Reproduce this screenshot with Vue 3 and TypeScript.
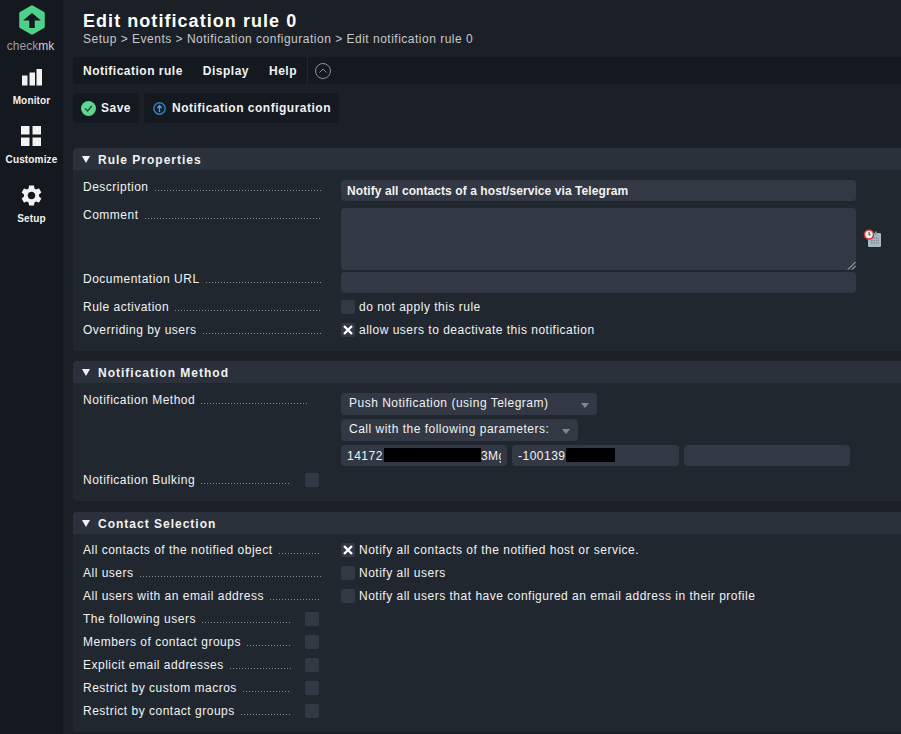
<script setup lang="ts">
interface Row { label: string; text?: string; checked?: boolean; outer?: boolean }
const contactRows: Row[] = [
  { label: 'All contacts of the notified object', text: 'Notify all contacts of the notified host or service.', checked: true },
  { label: 'All users', text: 'Notify all users' },
  { label: 'All users with an email address', text: 'Notify all users that have configured an email address in their profile' },
  { label: 'The following users', outer: true },
  { label: 'Members of contact groups', outer: true },
  { label: 'Explicit email addresses', outer: true },
  { label: 'Restrict by custom macros', outer: true },
  { label: 'Restrict by contact groups', outer: true },
]
const crumbs = 'Setup > Events > Notification configuration > Edit notification rule 0'
</script>

<template>
  <div class="page">
    <nav class="side">
      <div class="logo">
        <svg width="26" height="30" viewBox="0 0 26 30">
          <path d="M13 1.500 24.500 8.200 V21.800 L13 28.500 L1.500 21.800 V8.200 Z" fill="#4fd18b" stroke="#4fd18b" stroke-width="2.500" stroke-linejoin="round" />
          <path d="M13 8 L22 15.500 H15.700 V23 H10.300 V15.500 H4 Z" fill="#14181f" />
        </svg>
        <div class="brand">check<span>mk</span></div>
      </div>
      <div class="nav-item first">
        <svg width="20" height="17" viewBox="0 0 20 17"><path d="M0 6.500h5.500V16.500H0zM7.500 3.500H13v13H7.500zM14.500 0H20v16.500h-5.500z" fill="#f2f2f2" /></svg>
        <span>Monitor</span>
      </div>
      <div class="nav-item custom">
        <svg width="20" height="20" viewBox="0 0 20 20"><path d="M0 0h8.500v8.500H0zM11.500 0H20v8.500h-8.500zM0 11.500h8.500V20H0zM11.500 11.500H20V20h-8.500z" fill="#f2f2f2" /></svg>
        <span>Customize</span>
      </div>
      <div class="nav-item">
        <svg width="21" height="21" viewBox="2 2 20 20"><path fill="#f2f2f2" d="M19.140 12.940c.04-.3.06-.61.06-.94 0-.32-.02-.64-.07-.94l2.030-1.580c.18-.14.23-.41.12-.61l-1.920-3.320c-.12-.22-.37-.29-.59-.22l-2.390.96c-.5-.38-1.030-.7-1.620-.94l-.36-2.540c-.04-.24-.24-.41-.48-.41h-3.840c-.24 0-.43.17-.47.41l-.36 2.540c-.59.24-1.130.57-1.620.94l-2.390-.96c-.22-.08-.47 0-.59.22L2.740 8.870c-.12.21-.08.47.12.61l2.030 1.580c-.05.3-.09.63-.09.94s.02.64.07.94l-2.030 1.580c-.18.14-.23.41-.12.61l1.920 3.320c.12.22.37.29.59.22l2.390-.96c.5.38 1.030.7 1.620.94l.36 2.540c.05.24.24.41.48.41h3.840c.24 0 .44-.17.47-.41l.36-2.540c.59-.24 1.130-.56 1.620-.94l2.390.96c.22.08.47 0 .59-.22l1.920-3.320c.12-.22.07-.47-.12-.61l-2.010-1.580zM12 15.600c-1.980 0-3.600-1.620-3.600-3.600s1.620-3.600 3.600-3.600 3.600 1.620 3.600 3.600-1.620 3.600-3.600 3.600z" /></svg>
        <span>Setup</span>
      </div>
    </nav>

    <main class="main">
      <header class="title">
        <h1>Edit notification rule 0</h1>
        <div class="crumbs">{{ crumbs }}</div>
      </header>

      <div class="menubar">
        <div class="menus">
          <span>Notification rule</span><span>Display</span><span>Help</span>
        </div>
        <svg class="collapse" width="16" height="16" viewBox="0 0 16 16"><circle cx="8" cy="8" r="7.500" fill="none" stroke="#8b9097" /><path d="M4.500 9.500 8 6l3.500 3.500" fill="none" stroke="#8b9097" /></svg>
      </div>

      <div class="actions">
        <button class="btn save">
          <svg width="15" height="15" viewBox="0 0 15 15"><circle cx="7.500" cy="7.500" r="7.500" fill="#5fd68f" /><path d="M4.200 7.500 6.600 10 10.800 5" fill="none" stroke="#1f4a3a" stroke-width="1.300" /></svg>
          Save
        </button>
        <button class="btn conf">
          <svg width="13" height="13" viewBox="0 0 13 13"><circle cx="6.500" cy="6.500" r="5.700" fill="#14202e" stroke="#3a7fc4" stroke-width="1.400" /><path d="M6.500 10V4M4.300 6l2.200-2.300L8.700 6" fill="none" stroke="#5aa0e0" stroke-width="1.300" /></svg>
          Notification configuration
        </button>
      </div>

      <section class="sec one">
        <h2><i class="tri" />Rule Properties</h2>
        <div class="body">
          <div class="row r-input">
            <div class="lbl"><span>Description</span><b /></div>
            <div class="field wide strong">Notify all contacts of a host/service via Telegram</div>
          </div>
          <div class="row r-area">
            <div class="lbl"><span>Comment</span><b /></div>
            <div class="field wide area">
              <svg class="grip" width="9" height="9" viewBox="0 0 9 9"><path d="M1 8.500 8.500 1M5 8.500 8.500 5" stroke="#c8c8c8" fill="none" /></svg>
            </div>
            <svg class="stamp" width="19" height="19" viewBox="0 0 19 19">
              <rect x="5" y="4" width="13" height="14" rx="1" fill="#a9b7c0" />
              <rect x="12" y="2.500" width="2" height="3" fill="#7d8b95" />
              <path d="M8 9h8M8 11.500h8M8 14h8" stroke="#7d8b95" stroke-width="1.300" stroke-dasharray="1.500 1" />
              <circle cx="6" cy="5.500" r="4.500" fill="#f4f4f4" stroke="#d23a3a" stroke-width="1.600" />
              <path d="M6 3v3h1.500" stroke="#333" fill="none" />
            </svg>
          </div>
          <div class="row r-url">
            <div class="lbl"><span>Documentation URL</span><b /></div>
            <div class="field wide" />
          </div>
          <div class="row r-check">
            <div class="lbl"><span>Rule activation</span><b /></div>
            <label class="check"><i class="box" />do not apply this rule</label>
          </div>
          <div class="row r-check last">
            <div class="lbl"><span>Overriding by users</span><b /></div>
            <label class="check"><i class="box on"><svg width="10" height="10" viewBox="0 0 10 10"><path d="M1 1l8 8M9 1 1 9" stroke="#fff" stroke-width="2.400" /></svg></i>allow users to deactivate this notification</label>
          </div>
        </div>
      </section>

      <section class="sec two">
        <h2><i class="tri" />Notification Method</h2>
        <div class="body">
          <div class="row method">
            <div class="lbl short"><span>Notification Method</span><b /></div>
            <div class="stack">
              <div class="select s1">Push Notification (using Telegram)<i /></div>
              <div class="select s2">Call with the following parameters:<i /></div>
              <div class="params">
                <div class="field p1"><div class="clip">14172<em class="r1" />3Mgqz</div></div>
                <div class="field p2">-100139<em class="r2" /></div>
                <div class="field p3" />
              </div>
            </div>
          </div>
          <div class="row bulk">
            <div class="lbl tiny"><span>Notification Bulking</span><b /></div>
            <i class="box" />
          </div>
        </div>
      </section>

      <section class="sec three">
        <h2><i class="tri" />Contact Selection</h2>
        <div class="body">
          <div v-for="r in contactRows" :key="r.label" class="row c-row">
            <template v-if="r.outer">
              <div class="lbl tiny"><span>{{ r.label }}</span><b /></div>
              <i class="box" />
            </template>
            <template v-else>
              <div class="lbl"><span>{{ r.label }}</span><b /></div>
              <label class="check"><i class="box" :class="{ on: r.checked }"><svg v-if="r.checked" width="10" height="10" viewBox="0 0 10 10"><path d="M1 1l8 8M9 1 1 9" stroke="#fff" stroke-width="2.400" /></svg></i>{{ r.text }}</label>
            </template>
          </div>
        </div>
      </section>
    </main>
  </div>
</template>

<style>
html, body { margin: 0; background: #1b2027; }
</style>

<style scoped>
.page {
  display: flex;
  width: 901px;
  height: 734px;
  overflow: hidden;
  font-family: "Liberation Sans", Arial, sans-serif;
  font-size: 12px;
  letter-spacing: 0.5px;
  color: #f2f2f2;
  background: #1b2027;
}
.side {
  width: 63px;
  flex: none;
  background: #14181f;
  display: flex;
  flex-direction: column;
  align-items: center;
}
.logo { display: flex; flex-direction: column; align-items: center; padding-top: 5px; }
.logo svg { display: block; }
.brand { font-size: 12px; line-height: 14px; margin-top: 4px; margin-left: -2px; color: #9a9ea3; letter-spacing: 0.05px; }
.brand span { color: #d0d2d4; }
.nav-item {
  display: flex;
  flex-direction: column;
  align-items: center;
  font-size: 10px;
  font-weight: bold;
  height: 59px;
  letter-spacing: 0.15px;
}
.nav-item.first { margin-top: 16px; height: 57px; }
.nav-item span { margin-top: 7px; line-height: 12px; }
.nav-item.first span { margin-top: 9px; }
.nav-item.custom span { margin-top: 8px; }
.nav-item svg { display: block; }
.main { flex: 1; min-width: 0; padding-left: 10px; }
.title { padding: 11px 0 0 10px; height: 57px; box-sizing: border-box; }
h1 { margin: 0; font-size: 18px; line-height: 21px; font-weight: bold; letter-spacing: 1.05px; color: #fff; }
.crumbs { font-size: 12px; line-height: 15px; color: #c6c9cc; letter-spacing: 0.5px; }
.menubar {
  height: 27px;
  background: #14181f;
  display: flex;
  align-items: center;
  border-radius: 3px 0 0 3px;
}
.menus {
  display: flex;
  gap: 20px;
  align-items: center;
  height: 100%;
  padding: 0 10px;
  font-weight: bold;
  border-right: 1px solid #22272e;
}
.collapse { margin-left: 7px; }
.actions { display: flex; gap: 5px; margin-top: 9px; }
.btn {
  height: 30px;
  background: #14181f;
  border: 0;
  border-radius: 4px;
  color: #f2f2f2;
  font: inherit;
  font-weight: bold;
  letter-spacing: 0.5px;
  display: flex;
  align-items: center;
  gap: 5px;
  padding: 0 8px;
  white-space: nowrap;
}
.btn svg { flex: none; }
.save { width: 66px; }
.conf { width: 195px; gap: 6px; padding-left: 9px; }
.sec { background: #21272f; border-radius: 4px 0 0 4px; }
.one { margin-top: 25px; height: 203px; }
.two { margin-top: 10px; height: 140px; }
.three { margin-top: 11px; height: 220px; }
h2 {
  margin: 0;
  height: 22px;
  box-sizing: border-box;
  padding: 1px 0 0 9px;
  background: #2a313b;
  font-size: 12px;
  font-weight: bold;
  letter-spacing: 1px;
  display: flex;
  align-items: center;
  border-radius: 4px 0 0 0;
}
.tri {
  width: 0; height: 0;
  border-left: 4px solid transparent;
  border-right: 4px solid transparent;
  border-top: 7px solid #f2f2f2;
  margin-right: 8px;
}
.body { padding: 10px 0 0 10px; }
.row { display: flex; align-items: flex-start; }
.lbl {
  width: 238px;
  margin-right: 20px;
  flex: none;
  display: flex;
  line-height: 14px;
}
.lbl span { white-space: nowrap; }
.lbl b {
  flex: 1;
  margin: 10px 0 0 6px;
  height: 1px;
  background: repeating-linear-gradient(90deg, #8a8d92 0 1px, transparent 1px 3px);
}
.lbl.short { width: 225px; margin-right: 33px; }
.lbl.tiny { width: 208px; margin-right: 14px; }
.field {
  background: #323844;
  border-radius: 4px;
  height: 21px;
  line-height: 22px;
  box-sizing: border-box;
  padding: 0 6px;
}
.wide { width: 515px; }
.strong { font-weight: bold; font-size: 12px; letter-spacing: 0.08px; }
.r-input { height: 28px; }
.r-area { height: 64px; position: relative; }
.area { height: 62px; position: relative; }
.grip { position: absolute; right: 0; bottom: 0; }
.stamp { margin: 21px 0 0 7px; }
.r-url { height: 28px; }
.r-check { height: 23px; }
.check { display: flex; align-items: center; gap: 4px; height: 14px; white-space: nowrap; }
.box {
  width: 14px;
  height: 14px;
  background: #323844;
  border-radius: 2px;
  flex: none;
  display: flex;
  align-items: center;
  justify-content: center;
}
.row.method { height: 80px; }
.stack { display: flex; flex-direction: column; align-items: flex-start; gap: 4px; }
.select {
  background: #323844;
  border-radius: 4px;
  height: 22px;
  line-height: 21px;
  padding-left: 8px;
  box-sizing: border-box;
  position: relative;
}
.select i {
  position: absolute;
  right: 8px;
  top: 10px;
  border-left: 4px solid transparent;
  border-right: 4px solid transparent;
  border-top: 5px solid #84888e;
}
.s1 { width: 256px; }
.s2 { width: 237px; }
.params { display: flex; gap: 5px; }
.params .field { white-space: nowrap; overflow: hidden; }
.clip { overflow: hidden; white-space: nowrap; }
.p1 { width: 166px; }
.p2 { width: 167px; }
.p3 { width: 166px; }
.params em { display: inline-block; background: #000; height: 14px; vertical-align: -2px; }
.r1 { width: 97px; margin-left: 1px; }
.r2 { width: 49px; }
.bulk { height: 20px; }
.c-row { height: 23px; }
.three .body { padding-top: 9px; }
</style>
